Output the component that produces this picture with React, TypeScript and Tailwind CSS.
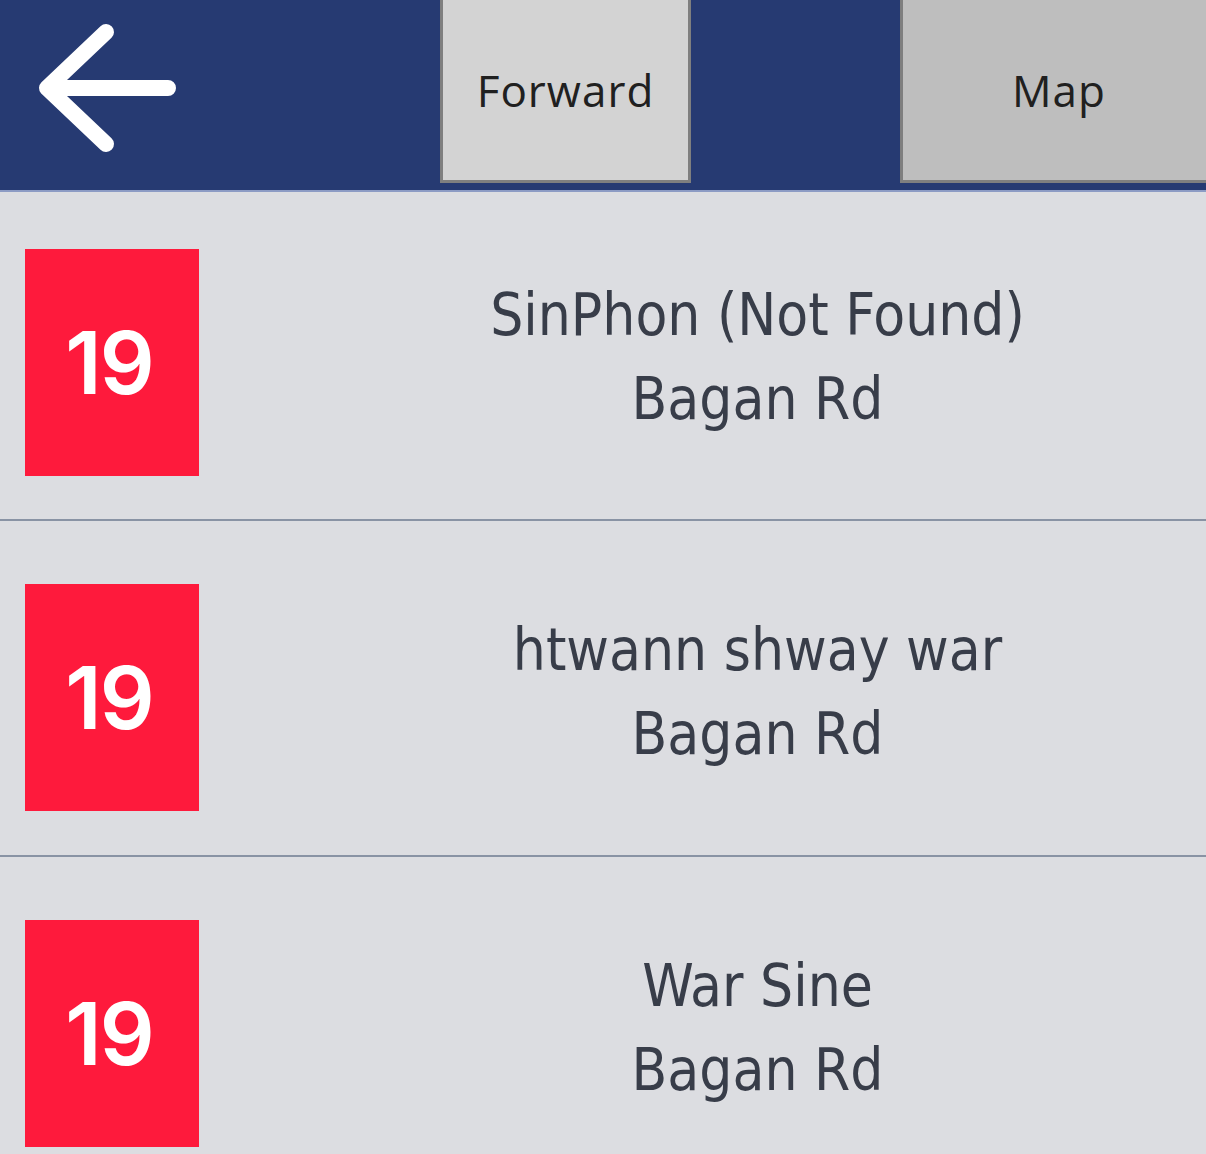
import React from "react";

const items = [
  { name: "SinPhon (Not Found)", road: "Bagan Rd" },
  { name: "htwann shway war", road: "Bagan Rd" },
  { name: "War Sine", road: "Bagan Rd" },
];

export default function App() {
  return (
    <div className="w-[1206px] h-[1154px] overflow-hidden bg-[#dcdde1]">
      <header className="relative h-[192px] bg-[#263a72] border-b-2 border-[#8c9bc4] flex">
        <div className="w-[440px] shrink-0 h-full flex items-start">
          <svg width="200" height="190" viewBox="0 0 200 190" className="block">
            <path
              d="M168 88 H48 M106 32 L47 88 L106 144"
              fill="none"
              stroke="#ffffff"
              strokeWidth="16"
              strokeLinecap="round"
              strokeLinejoin="round"
            />
          </svg>
        </div>
        <div className="w-[251px] shrink-0 h-[186px] -mt-[3px] bg-[#d3d3d3] border-[3px] border-[#7f7f7f] flex items-center justify-center pt-[0px]">
          <span className="text-[44px] leading-none text-[#202020] tracking-[1px]" style={{ fontFamily: '"Open Sans", sans-serif' }}>
            Forward
          </span>
        </div>
        <div className="w-[209px] shrink-0" />
        <div className="w-[320px] shrink-0 h-[186px] -mt-[3px] bg-[#bebebe] border-[3px] border-[#7f7f7f] flex items-center pl-[109px] pt-[0px]">
          <span className="text-[44px] leading-none text-[#202020] tracking-[1px]" style={{ fontFamily: '"Open Sans", sans-serif' }}>
            Map
          </span>
        </div>
      </header>
      <div>
        {items.map((it, i) => (
          <div
            key={i}
            className={
              "flex items-start pl-[25px] border-b-2 border-[#8993a4] " +
              (i === 0 ? "pt-[57px] pb-[43px]" : "pt-[63px] pb-[44px]")
            }
          >
            <div className="w-[174px] h-[227px] shrink-0 bg-[#fe1a3c] flex items-center justify-center pr-[6px]">
              <span
                className="text-white text-[86px] font-semibold leading-none tracking-[-2px]"
                style={{ fontFamily: 'Inter, sans-serif' }}
              >
                19
              </span>
            </div>
            <div
              className="flex-1 h-[227px] flex flex-col items-center justify-center pl-[110px] pb-[12px] text-[#383d49] text-[58px] leading-[84px]"
              style={{ fontFamily: '"DejaVu Sans Condensed", "DejaVu Sans", sans-serif', fontStretch: "condensed" }}
            >
              <div>{it.name}</div>
              <div>{it.road}</div>
            </div>
          </div>
        ))}
      </div>
    </div>
  );
}
